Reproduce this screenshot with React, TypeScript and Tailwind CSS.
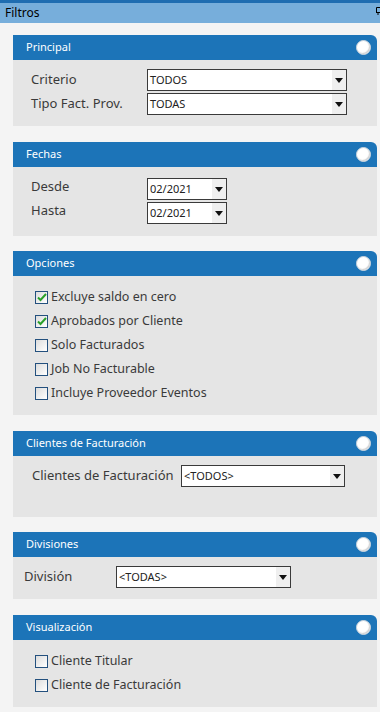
import React from "react";

const font = { fontFamily: '"Noto Sans", "DejaVu Sans", sans-serif' };

function Panel({
  title,
  className,
  bodyClass,
  children,
}: {
  title: string;
  className: string;
  bodyClass: string;
  children?: React.ReactNode;
}) {
  return (
    <div className={`ml-[13px] mr-[3px] ${className}`}>
      <div className="flex h-[25px] items-center justify-between rounded-tr-[6px] bg-[#1c74b8] pl-[13px] pr-[6px]">
        <span className="text-[11px] text-white">{title}</span>
        <span className="h-[15px] w-[15px] rounded-full border border-[#c9d3dc] bg-white shadow-[inset_-1px_-1px_1px_#d0d0d0]" />
      </div>
      <div className={`bg-[#e5e5e5] ${bodyClass}`}>{children}</div>
    </div>
  );
}

function Select({ value, width }: { value: string; width: string }) {
  return (
    <div
      className={`flex h-[22px] items-center border border-[#3a3a3a] bg-white ${width}`}
    >
      <span className="flex-1 pl-[2px] text-[11px] text-[#222]">{value}</span>
      <span className="flex h-full w-[14px] items-center justify-center bg-[#efefef]">
        <svg width="8" height="5" viewBox="0 0 8 5">
          <path d="M0 0h8L4 5z" fill="#111" />
        </svg>
      </span>
    </div>
  );
}

function Check({ label, checked }: { label: string; checked?: boolean }) {
  return (
    <div className="flex h-[24px] items-center">
      <span className="flex h-[13px] w-[13px] items-center justify-center border border-[#23507e] bg-gradient-to-br from-[#dcdcdc] to-white">
        {checked && (
          <svg width="10" height="9" viewBox="0 0 10 9">
            <path d="M1 4.5l2.5 2.5L9 1" stroke="#2aa02a" strokeWidth="2" fill="none" />
          </svg>
        )}
      </span>
      <span className="ml-[3px] text-[12.5px] text-[#3a3a3a]">{label}</span>
    </div>
  );
}

export default function App() {
  return (
    <div className="h-[712px] w-[380px] overflow-hidden bg-[#f4f4f4]" style={font}>
      <div className="h-[3px] bg-[#1f6db1]" />
      <div className="flex h-[20px] items-center justify-between bg-[#77aedb] pl-[5px]">
        <span className="text-[12px] text-black">Filtros</span>
        <svg width="4" height="8" viewBox="0 0 4 8" className="mb-[4px]">
          <path d="M0.5 0.5h3.5M0.5 0.5v5M0 5.5h4M2 5.5v2.5" stroke="#000" strokeWidth="1" fill="none" />
        </svg>
      </div>

      <div className="mt-[12px] flex flex-col">
        <Panel title="Principal" className="" bodyClass="h-[66px] pt-[9px] pl-[18px] flex flex-col gap-[2px]">
          <div className="flex items-center">
            <span className="w-[116px] text-[13px] text-[#3a3a3a]">Criterio</span>
            <Select value="TODOS" width="w-[200px]" />
          </div>
          <div className="flex items-center">
            <span className="w-[116px] text-[13px] text-[#3a3a3a]">Tipo Fact. Prov.</span>
            <Select value="TODAS" width="w-[200px]" />
          </div>
        </Panel>

        <Panel title="Fechas" className="mt-[16px]" bodyClass="h-[69px] pt-[11px] pl-[18px] flex flex-col gap-[2px]">
          <div className="flex items-center">
            <span className="-mt-[4px] w-[116px] text-[13px] text-[#3a3a3a]">Desde</span>
            <Select value="02/2021" width="w-[80px]" />
          </div>
          <div className="flex items-center">
            <span className="-mt-[4px] w-[116px] text-[13px] text-[#3a3a3a]">Hasta</span>
            <Select value="02/2021" width="w-[80px]" />
          </div>
        </Panel>

        <Panel title="Opciones" className="mt-[15px]" bodyClass="h-[139px] pt-[9px] pl-[22px]">
          <Check label="Excluye saldo en cero" checked />
          <Check label="Aprobados por Cliente" checked />
          <Check label="Solo Facturados" />
          <Check label="Job No Facturable" />
          <Check label="Incluye Proveedor Eventos" />
        </Panel>

        <Panel title="Clientes de Facturación" className="mt-[16px]" bodyClass="h-[61px] pt-[9px] pl-[19px]">
          <div className="flex items-center">
            <span className="w-[149px] text-[13px] text-[#3a3a3a]">Clientes de Facturación</span>
            <Select value="<TODOS>" width="w-[164px]" />
          </div>
        </Panel>

        <Panel title="Divisiones" className="mt-[15px]" bodyClass="h-[42px] pt-[9px] pl-[11px]">
          <div className="flex items-center">
            <span className="w-[92px] text-[13px] text-[#3a3a3a]">División</span>
            <Select value="<TODAS>" width="w-[175px]" />
          </div>
        </Panel>

        <Panel title="Visualización" className="mt-[16px]" bodyClass="h-[67px] pt-[9px] pl-[22px]">
          <Check label="Cliente Titular" />
          <Check label="Cliente de Facturación" />
        </Panel>
      </div>
    </div>
  );
}
